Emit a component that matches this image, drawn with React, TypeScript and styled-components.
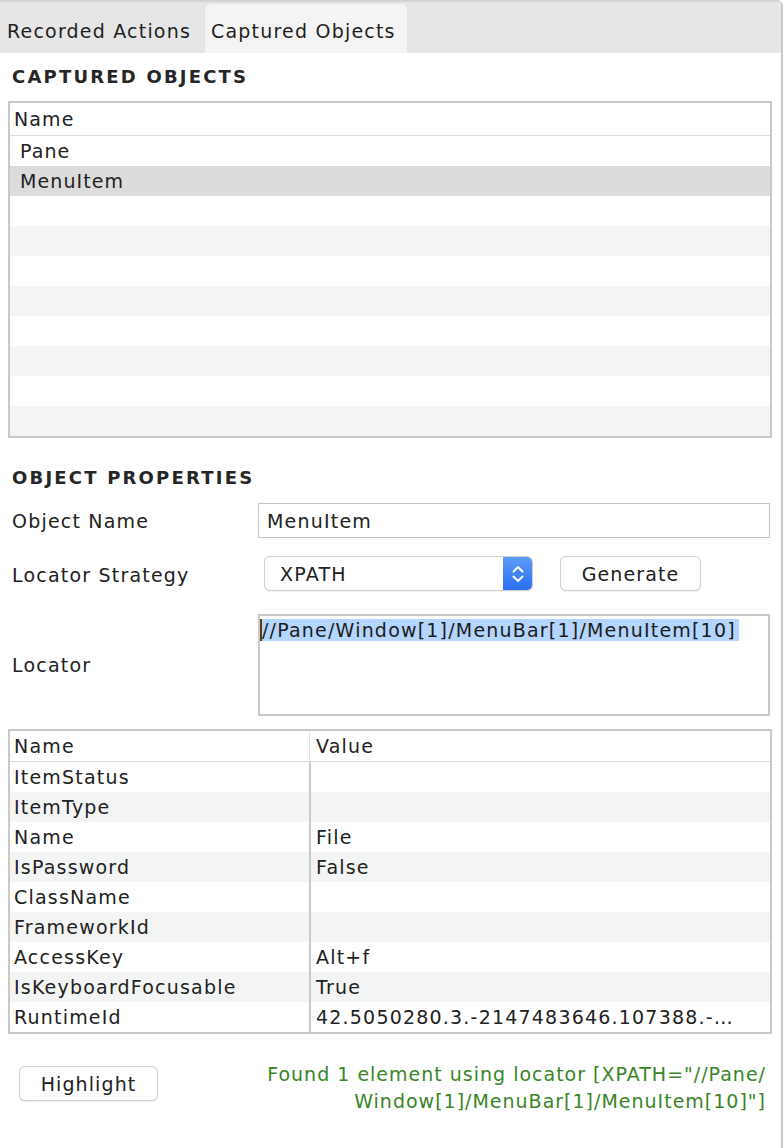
import styled, { createGlobalStyle } from "styled-components";

const GlobalStyle = createGlobalStyle`
  html, body {
    margin: 0;
    padding: 0;
    background: #ffffff;
  }
  * {
    box-sizing: border-box;
  }
`;

const FONT = `"DejaVu Sans", "Liberation Sans", sans-serif`;

const capturedRows = ["Pane", "MenuItem", "", "", "", "", "", "", "", ""];

const properties: [string, string][] = [
  ["ItemStatus", ""],
  ["ItemType", ""],
  ["Name", "File"],
  ["IsPassword", "False"],
  ["ClassName", ""],
  ["FrameworkId", ""],
  ["AccessKey", "Alt+f"],
  ["IsKeyboardFocusable", "True"],
  ["RuntimeId", "42.5050280.3.-2147483646.107388.-…"],
];

const SelectArrows = () => (
  <svg width="16" height="22" viewBox="0 0 16 22" fill="none">
    <path d="M3.5 8.5 L8 4 L12.5 8.5" stroke="#fff" strokeWidth="2" strokeLinecap="round" strokeLinejoin="round" />
    <path d="M3.5 13.5 L8 18 L12.5 13.5" stroke="#fff" strokeWidth="2" strokeLinecap="round" strokeLinejoin="round" />
  </svg>
);

const App = () => {
  return (
    <Panel>
      <GlobalStyle />
      <TabBar>
        <Tab>Recorded Actions</Tab>
        <Tab $active>Captured Objects</Tab>
      </TabBar>
      <Content>
        <SectionTitle>CAPTURED OBJECTS</SectionTitle>
        <Table>
          <HeaderRow>
            <HeaderCell>Name</HeaderCell>
          </HeaderRow>
          {capturedRows.map((name, i) => (
            <ObjectRow key={i} $selected={i === 1} $striped={i > 1 && i % 2 === 1}>
              {name}
            </ObjectRow>
          ))}
        </Table>

        <SectionTitle $gap={26}>OBJECT PROPERTIES</SectionTitle>
        <Form>
          <Label>Object Name</Label>
          <TextInput>MenuItem</TextInput>

          <Label $nudge={3}>Locator Strategy</Label>
          <Controls>
            <Select>
              <SelectValue>XPATH</SelectValue>
              <SelectButton>
                <SelectArrows />
              </SelectButton>
            </Select>
            <Button $width={139}>Generate</Button>
          </Controls>

          <Label $top={5}>Locator</Label>
          <TextArea>
            <Selection>//Pane/Window[1]/MenuBar[1]/MenuItem[10]</Selection>
          </TextArea>
        </Form>

        <Table $gap={13}>
          <PropHeader>
            <PropHeadCell>Name</PropHeadCell>
            <PropHeadCell $value>Value</PropHeadCell>
          </PropHeader>
          {properties.map(([name, value], i) => (
            <PropRow key={name} $striped={i % 2 === 1}>
              <PropCell>{name}</PropCell>
              <PropCell $value>{value}</PropCell>
            </PropRow>
          ))}
        </Table>

        <Footer>
          <Button $width={137}>Highlight</Button>
          <Message>
            Found 1 element using locator [XPATH="//Pane/
            <br />
            Window[1]/MenuBar[1]/MenuItem[10]"]
          </Message>
        </Footer>
      </Content>
    </Panel>
  );
};

const Panel = styled.div`
  width: 783px;
  min-height: 1148px;
  background: #ffffff;
  border-right: 2px solid #c9c9c9;
  border-top-right-radius: 6px;
  font-family: ${FONT};
  color: #222222;
  overflow: hidden;
`;

const TabBar = styled.div`
  display: flex;
  align-items: flex-end;
  height: 53px;
  background: #e6e6e6;
  border-top: 2px solid #d2d2d2;
`;

const Tab = styled.div<{ $active?: boolean }>`
  height: 49px;
  display: flex;
  align-items: center;
  padding: 5px 11px 0 ${({ $active }) => ($active ? "6px" : "7px")};
  margin-left: ${({ $active }) => ($active ? "3px" : "0")};
  font-size: 19px;
  letter-spacing: 1.2px;
  color: #1f1f1f;
  background: ${({ $active }) => ($active ? "#f4f4f4" : "transparent")};
  border-radius: 5px 5px 0 0;
`;

const Content = styled.div`
  padding: 0 9px 0 8px;
`;

const SectionTitle = styled.div<{ $gap?: number }>`
  margin-top: ${({ $gap }) => $gap ?? 10}px;
  height: 28px;
  line-height: 28px;
  padding-left: 4px;
  font-size: 18px;
  font-weight: 700;
  letter-spacing: 2.2px;
  color: #262626;
`;

const Table = styled.div<{ $gap?: number }>`
  margin-top: ${({ $gap }) => $gap ?? 10}px;
  border: 2px solid #c9c9c9;
  background: #ffffff;
`;

const HeaderRow = styled.div`
  height: 33px;
  display: flex;
  align-items: center;
  border-bottom: 1px solid #dadada;
`;

const HeaderCell = styled.div`
  padding-left: 4px;
  font-size: 19px;
  letter-spacing: 1.1px;
`;

const ObjectRow = styled.div<{ $selected?: boolean; $striped?: boolean }>`
  height: 30px;
  display: flex;
  align-items: center;
  padding-left: 10px;
  font-size: 19px;
  letter-spacing: 1.1px;
  background: ${({ $selected, $striped }) =>
    $selected ? "#dcdcdc" : $striped ? "#f3f4f4" : "#ffffff"};
`;

const Form = styled.div`
  margin-top: 11px;
  display: grid;
  grid-template-columns: 250px 512px;
  grid-template-rows: 35px 33px 107px;
  row-gap: 19px;
`;

const Label = styled.div<{ $top?: number; $nudge?: number }>`
  display: flex;
  align-items: center;
  margin-top: ${({ $top }) => $top ?? 0}px;
  padding-left: 4px;
  padding-top: ${({ $nudge }) => $nudge ?? 0}px;
  font-size: 19px;
  letter-spacing: 1.2px;
  color: #222222;
`;

const TextInput = styled.div`
  border: 1px solid #c2c2c2;
  display: flex;
  align-items: center;
  padding-left: 8px;
  font-size: 19px;
  letter-spacing: 1.2px;
  color: #222222;
`;

const Controls = styled.div`
  display: flex;
  align-items: center;
  gap: 29px;
  padding-left: 7px;
`;

const Select = styled.div`
  width: 267px;
  height: 33px;
  display: flex;
  border-radius: 5px;
  background: #ffffff;
  box-shadow: 0 0 0 1px #d0d0d0, 0 1px 2px rgba(0, 0, 0, 0.18);
  overflow: hidden;
`;

const SelectValue = styled.div`
  flex: 1;
  display: flex;
  align-items: center;
  padding-left: 15px;
  font-size: 19px;
  letter-spacing: 1.2px;
`;

const SelectButton = styled.div`
  width: 29px;
  display: flex;
  align-items: center;
  justify-content: center;
  background: linear-gradient(#5d9cf7, #2a6ef4);
`;

const Button = styled.div<{ $width: number }>`
  width: ${({ $width }) => $width}px;
  height: 33px;
  display: flex;
  align-items: center;
  justify-content: center;
  border-radius: 5px;
  background: #ffffff;
  box-shadow: 0 0 0 1px #d0d0d0, 0 1px 2px rgba(0, 0, 0, 0.2);
  font-size: 19px;
  letter-spacing: 1.1px;
  color: #222222;
`;

const TextArea = styled.div`
  margin-top: 5px;
  border: 2px solid #c9c9c9;
  padding-top: 1px;
  font-size: 19px;
  letter-spacing: 1.2px;
  line-height: 26px;
`;

const Selection = styled.span`
  background: #b4d5fe;
  border-left: 2px solid #5c3b0e;
  padding-right: 3px;
  color: #1c1c1c;
`;

const PropHeader = styled.div`
  height: 31px;
  display: grid;
  grid-template-columns: 299px 1fr;
  border-bottom: 1px solid #dadada;
`;

const PropHeadCell = styled.div<{ $value?: boolean }>`
  display: flex;
  align-items: center;
  padding-left: ${({ $value }) => ($value ? "6px" : "4px")};
  font-size: 19px;
  letter-spacing: 1.2px;
  border-left: ${({ $value }) => ($value ? "1px solid #e2e2e2" : "none")};
`;

const PropRow = styled.div<{ $striped?: boolean }>`
  height: 30px;
  display: grid;
  grid-template-columns: 299px 1fr;
  background: ${({ $striped }) => ($striped ? "#f3f4f4" : "#ffffff")};
`;

const PropCell = styled.div<{ $value?: boolean }>`
  display: flex;
  align-items: center;
  padding-left: ${({ $value }) => ($value ? "5px" : "4px")};
  font-size: 19px;
  letter-spacing: 1.2px;
  white-space: nowrap;
  overflow: hidden;
  border-left: ${({ $value }) => ($value ? "2px solid #c9c9c9" : "none")};
`;

const Footer = styled.div`
  margin-top: 27px;
  display: flex;
  justify-content: space-between;
  align-items: flex-start;
  padding: 0 6px 0 12px;
  & > :first-child {
    margin-top: 6px;
  }
`;

const Message = styled.div`
  text-align: right;
  font-size: 19px;
  letter-spacing: 1px;
  line-height: 27px;
  color: #3a8527;
`;

export default App;
